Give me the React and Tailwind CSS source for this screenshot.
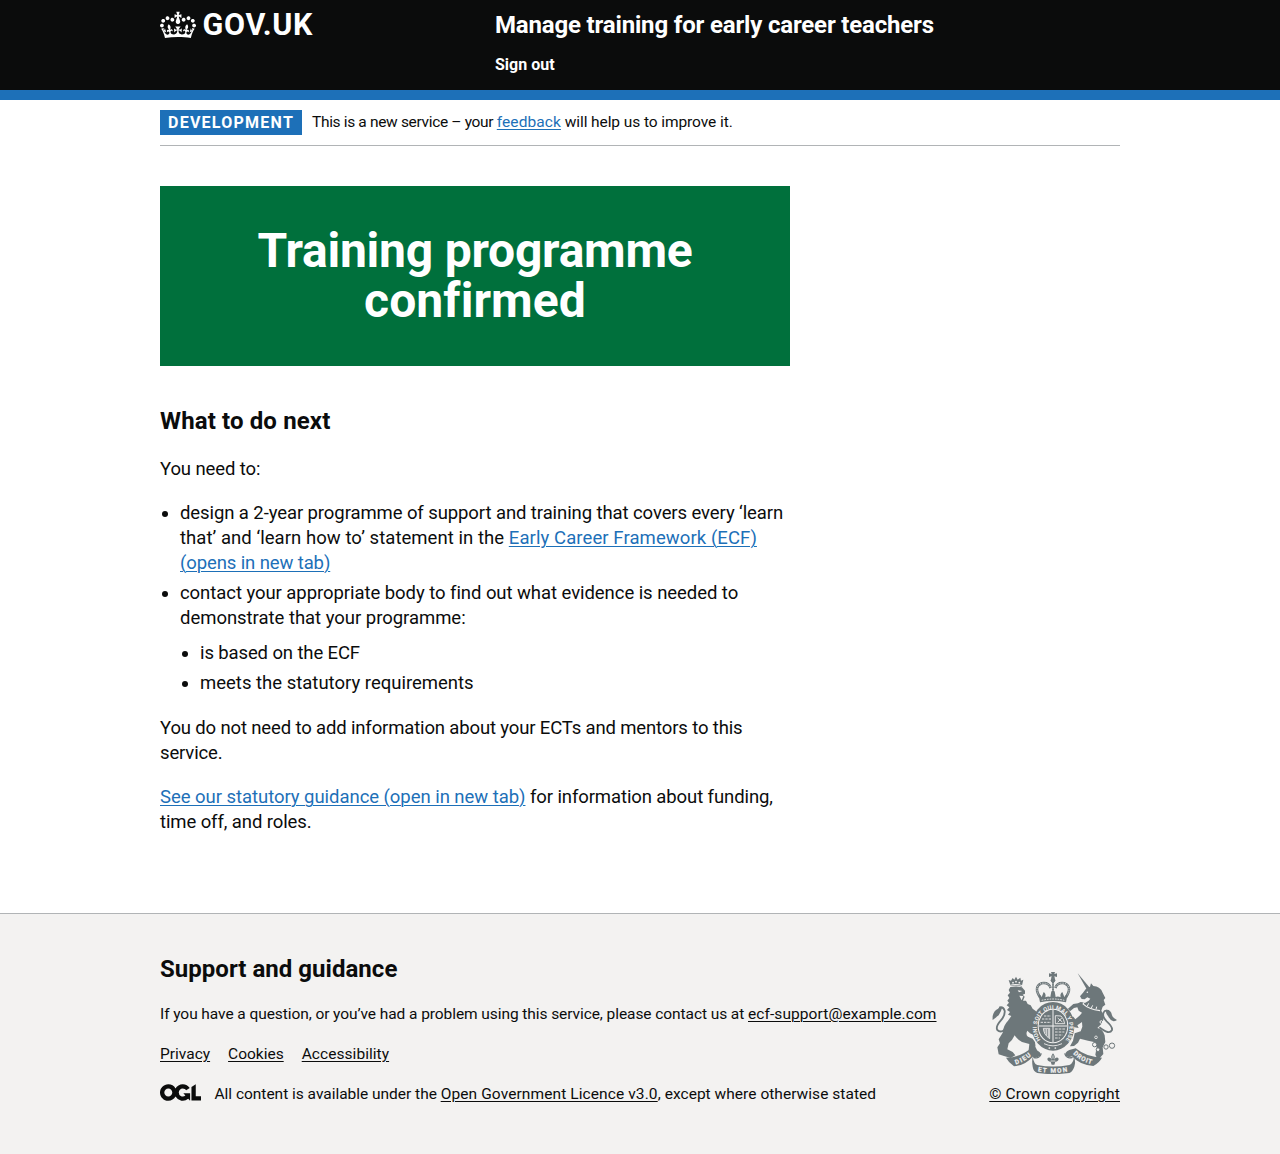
import React from 'react';

const link = 'text-[#1d70b8] underline decoration-1 underline-offset-2';
const darkLink = 'text-[#0b0c0c] underline decoration-1 underline-offset-2';

function Crown() {
  return (
    <svg viewBox="0 0 132 97" width="36" height="30" fill="currentColor" aria-hidden="true" className="shrink-0">
      <path
        fillRule="evenodd"
        d="M25 30.2c3.5 1.5 7.7-.2 9.1-3.7 1.5-3.6-.2-7.8-3.9-9.2-3.6-1.4-7.6.3-9.1 3.9-1.4 3.5.3 7.5 3.9 9zM9 39.5c3.6 1.5 7.8-.2 9.2-3.7 1.5-3.6-.2-7.8-3.9-9.1-3.6-1.5-7.6.2-9.1 3.8-1.4 3.5.3 7.5 3.8 9zM4.4 57.2c3.5 1.5 7.7-.2 9.1-3.8 1.5-3.6-.2-7.7-3.9-9.1-3.5-1.5-7.6.3-9.1 3.8-1.4 3.5.3 7.6 3.9 9.1zm38.3-21.4c3.5 1.5 7.7-.2 9.1-3.8 1.5-3.6-.2-7.7-3.9-9.1-3.6-1.5-7.6.3-9.1 3.8-1.3 3.6.4 7.7 3.9 9.1zm64.4-5.6c-3.6 1.5-7.8-.2-9.1-3.7-1.5-3.6.2-7.8 3.8-9.2 3.6-1.4 7.7.3 9.2 3.9 1.3 3.5-.4 7.5-3.9 9zm15.9 9.3c-3.6 1.5-7.7-.2-9.1-3.7-1.5-3.6.2-7.8 3.7-9.1 3.6-1.5 7.7.2 9.2 3.8 1.5 3.5-.3 7.5-3.8 9zm4.7 17.7c-3.6 1.5-7.8-.2-9.2-3.8-1.5-3.6.2-7.7 3.9-9.1 3.6-1.5 7.7.3 9.2 3.8 1.3 3.5-.4 7.6-3.9 9.1zM89.3 35.8c-3.6 1.5-7.8-.2-9.2-3.8-1.4-3.6.2-7.7 3.9-9.1 3.6-1.5 7.7.3 9.2 3.8 1.4 3.6-.3 7.7-3.9 9.1zM69.7 17.7l8.9 4.7V9.3l-8.9 2.8c-.2-.3-.5-.6-.9-.9L72.4 0H59.6l3.5 11.2c-.3.3-.6.5-.9.9l-8.8-2.8v13.1l8.8-4.7c.3.3.6.7.9.9l-5 15.4v.1c-.2.8-.4 1.6-.4 2.4 0 4.1 3.1 7.5 7 8.1h.2c.3 0 .7.1 1 .1.4 0 .7 0 1-.1h.2c4-.6 7.1-4.1 7.1-8.1 0-.8-.1-1.7-.4-2.4V34l-5.1-15.4c.4-.2.7-.6 1-.9zM66 92.8c16.9 0 32.8 1.1 47.1 3.2 4-16.9 8.9-26.7 14-33.5l-9.6-3.4c1 4.9 1.1 7.2 0 10.2-1.5-1.4-3-4.3-4.2-8.7L108.6 76c2.8-2 5-3.2 7.5-3.3-4.4 9.4-10 11.9-13.6 11.2-4.3-.8-6.3-4.6-5.6-7.9 1-4.7 5.7-5.9 8-.5 4.3-8.7-3-11.4-7.6-8.8 7.1-7.2 7.9-13.5 2.1-21.1-8 6.1-8.1 12.3-4.5 20.8-4.7-5.4-12.1-2.5-9.5 6.2 3.4-5.2 7.9-2 7.2 3.1-.6 4.3-6.4 7.8-13.5 7.2-10.3-.9-10.9-8-11.2-13.8 2.5-.5 7.1 1.8 11 7.3L80.2 60c-4.1 4.4-8 5.3-12.3 5.4 1.4-4.4 8-11.6 8-11.6H55.5s6.4 7.2 7.9 11.6c-4.2-.1-8-1-12.3-5.4l1.4 16.4c3.9-5.5 8.5-7.7 10.9-7.3-.3 5.8-.9 12.8-11.1 13.8-7.2.6-12.9-2.9-13.5-7.2-.7-5 3.8-8.3 7.1-3.1 2.7-8.7-4.6-11.6-9.4-6.2 3.7-8.5 3.6-14.7-4.6-20.8-5.8 7.6-5 13.9 2.2 21.1-4.7-2.6-11.9.1-7.7 8.8 2.3-5.5 7.1-4.2 8.1.5.7 3.3-1.3 7.1-5.7 7.9-3.5.7-9-1.8-13.5-11.2 2.5.1 4.7 1.3 7.5 3.3l-4.7-15.4c-1.2 4.4-2.7 7.2-4.3 8.7-1.1-3-.9-5.3 0-10.2l-9.5 3.4c5 6.9 9.9 16.7 14 33.5 14.8-2.1 30.8-3.2 47.7-3.2z"
      />
    </svg>
  );
}

function OglLogo() {
  return (
    <svg viewBox="0 0 483.2 195.7" width="41" height="17" fill="currentColor" aria-hidden="true" className="mr-[13.5px] mb-[3px] shrink-0">
      <path d="M421.5 142.8V.1l-50.7 32.3v161.1h112.4v-50.7zm-122.3-9.6A47.12 47.12 0 0 1 221 97.8c0-26 21.1-47.1 47.1-47.1 16.7 0 31.4 8.7 39.7 21.8l42.7-27.2A97.63 97.63 0 0 0 268.1 0c-36.5 0-68.3 20.1-85.1 49.7A98 98 0 0 0 97.8 0C43.9 0 0 43.9 0 97.8s43.9 97.8 97.8 97.8c36.5 0 68.3-20.1 85.1-49.7a97.76 97.76 0 0 0 149.6 25.4l19.4 22.2h3v-87.8h-80l24.3 27.5zM97.8 145c-26 0-47.1-21.1-47.1-47.1s21.1-47.1 47.1-47.1 47.1 21.1 47.1 47.1S123.8 145 97.8 145" />
    </svg>
  );
}

/* Royal coat of arms: lion and unicorn either side of the crowned shield. */
function CoatOfArms() {
  const ink = '#6d777a';
  const paper = '#f3f2f1';
  return (
    <svg viewBox="36 36 375 306" width="125" height="102" fill={ink} stroke="none" aria-hidden="true">
      <defs>
        <path id="garter" d="M182 240 A49 56 0 1 1 257 240" />
        <path id="dieu" d="M107 313 Q136 305 158 283" />
        <path id="mon" d="M173 334 Q219 343 267 334" />
        <path id="droit" d="M279 281 Q302 305 337 313" />
      </defs>

      {/* lion */}
      <path d="M92 78 L86 60 L93 62 L98 54 L103 59 L108 50 L113 59 L121 53 L123 62 L130 59 L125 80 Q108 74 92 78Z" />
      <path d="M91 81 Q108 77 126 82 L135 92 L135 101 L128 104 L134 110 L129 122 L138 122 L143 132 L152 136 L158 146 L168 154 L170 166 L162 178 L160 196 L170 210 L174 222 L166 228 L150 220 L142 212 Q136 224 144 230 L158 236 Q168 246 166 260 L172 272 L158 276 L146 270 L148 252 L126 246 Q110 236 104 226 Q98 240 86 250 L82 268 L98 276 L106 286 L92 294 L72 288 L56 283 L52 262 L60 250 L56 238 L68 218 Q70 196 84 182 L94 168 L84 164 L90 156 L81 150 L88 142 L80 136 L87 128 L82 122 L88 114 L83 106 L90 98 L86 90Z" />
      <path d="M88 194 Q66 224 52 210 Q46 200 62 182 Q76 166 74 152 Q70 140 60 142 Q58 154 46 162" fill="none" stroke={ink} strokeWidth="5.5" />
      <path d="M38 180 Q36 160 48 150 Q60 142 66 144 Q64 154 56 166 Q48 172 38 180Z" />
      <g fill={paper}>
        <circle cx="99" cy="68" r="2.6" /><circle cx="108" cy="65" r="2.6" /><circle cx="118" cy="68" r="2.6" />
        <path d="M91 74 Q108 70 126 75 L126 78 Q108 73 91 77Z" />
        <path d="M113 91 L127 93 L117 97Z" />
        <path d="M118 107 L130 108 L125 121Z" />
      </g>

      {/* unicorn */}
      <path d="M293 40 L330 84 L321 89Z" />
      <path d="M318 86 L330 80 L333 70 L340 78 Q360 78 368 98 L376 114 L371 120 L376 134 L368 140 L364 152 Q378 172 364 192 L352 204 Q368 206 374 226 L376 246 L368 262 L370 282 L354 300 L346 284 L350 262 L342 246 L324 242 L300 236 L294 248 L282 258 L270 259 L279 242 L284 220 L302 214 L307 200 L306 186 L292 196 L296 204 L284 202 L268 184 L267 171 L280 170 L286 178 L300 166 L306 158 L296 152 L292 142 L282 144 L270 154 L264 146 L280 132 L294 130 L302 126 L316 128 L326 122 L331 116 L322 112 L314 118 L305 117 L300 109 L309 98 Z" />
      <path d="M358 202 Q388 226 396 210 Q398 200 380 184 Q362 166 374 153 Q384 148 388 162" fill="none" stroke={ink} strokeWidth="5.5" />
      <path d="M376 150 Q392 146 396 166 Q400 176 411 180 Q396 190 388 174 Q378 164 376 150Z" />
      <g fill="none" stroke={paper} strokeWidth="3.5">
        <path d="M308 131 Q326 148 360 152" />
        <path d="M314 124 L310 132 M326 130 L322 138 M338 136 L334 144 M350 140 L348 148" strokeWidth="3" />
      </g>
      <circle cx="322" cy="97" r="2.3" fill={paper} />
      <g fill="none" stroke={ink} strokeWidth="3">
        <circle cx="344" cy="254" r="6.5" fill={paper} />
        <circle cx="354" cy="269" r="5.5" fill={paper} />
        <circle cx="378" cy="261" r="6.5" fill={paper} />
        <circle cx="396" cy="257" r="8" fill={paper} />
        <circle cx="364" cy="186" r="4" stroke={paper} />
        <circle cx="348" cy="232" r="4" stroke={paper} strokeWidth="2.4" />
      </g>

      {/* crown above the shield */}
      <path d="M213 36 H225 L223 42 L231 40 V51 L223 49 L225 56 H213 L215 49 L207 51 V40 L215 42Z" />
      <circle cx="219" cy="61" r="7" />
      <path d="M180 112 Q160 80 184 70 Q206 66 212 84 M258 112 Q278 80 254 70 Q232 66 226 84" fill="none" stroke={ink} strokeWidth="7.5" />
      <path d="M219 66 V96" stroke={ink} strokeWidth="6" fill="none" />
      <path d="M180 112 Q160 80 184 70 Q206 66 212 84 M258 112 Q278 80 254 70 Q232 66 226 84 M219 70 V92" fill="none" stroke={paper} strokeWidth="2.6" strokeDasharray="3 3.5" />
      <path d="M180 127 L175 103 Q182 104 185 111 L191 96 Q199 102 196 112 Q205 108 211 111 L214 94 H224 L227 111 Q234 108 242 112 Q239 102 247 96 L253 111 Q257 104 263 103 L258 127 Q219 119 180 127Z" />
      <path d="M185 121 Q219 113 253 121" fill="none" stroke={paper} strokeWidth="2.6" strokeDasharray="5 3" />

      {/* garter and shield */}
      <ellipse cx="219" cy="199" rx="64" ry="73" />
      <ellipse cx="219" cy="198" rx="46" ry="52" fill={paper} />
      <ellipse cx="219" cy="198" rx="43" ry="49" />
      <text fill={paper} fontFamily="Roboto, sans-serif" fontWeight="700" fontSize="17">
        <textPath href="#garter" textLength="242">HONI SOIT QUI MAL Y PENSE</textPath>
      </text>
      <path d="M219 150 V246 M177 198 H261" stroke={paper} strokeWidth="3" fill="none" />
      <g fill="none" stroke={paper} strokeWidth="2.6">
        <path d="M192 168 H213 M186 177 H213 M182 187 H213" strokeDasharray="7 3" />
        <path d="M226 167 V191 H254 Q252 176 243 168Z M233 174 L247 186 M245 174 L233 187" />
        <path d="M190 205 Q191 224 209 236 V205Z M195 207 V220 M200 207 V227 M205 207 V231" />
        <path d="M225 207 H256 M225 216 H253 M225 225 H248 M225 234 H240" strokeDasharray="8 3" />
      </g>
      <path d="M192 251 Q219 264 246 251" fill="none" stroke={paper} strokeWidth="2.6" />
      <circle cx="208" cy="264" r="2.6" fill={paper} />
      <circle cx="226" cy="264" r="2.6" fill={paper} />

      {/* motto scroll */}
      <path d="M78 293 Q120 292 151 266 L170 271 Q186 278 181 288 Q168 294 158 290 Q136 316 102 319 Q86 308 78 293Z" />
      <path d="M366 293 Q320 292 287 265 L268 270 Q252 278 257 288 Q266 294 276 289 Q300 316 340 318 Q358 308 366 293Z" />
      <path d="M158 290 Q162 312 172 315 Q219 324 268 315 Q280 310 282 290 Q288 304 283 320 Q277 336 268 339 Q219 346 172 339 Q160 334 158 320 Q155 304 158 290Z" />
      <path d="M160 292 Q180 298 184 280 M278 292 Q258 298 254 280" fill="none" stroke={ink} strokeWidth="3.5" />
      <path d="M219 280 Q228 290 222 299 Q230 288 236 296 Q236 304 226 305 L223 314 H215 L212 305 Q202 304 202 296 Q208 288 216 299 Q210 290 219 280Z" />
      <path d="M219 286 V296 M212 303 H226" stroke={paper} strokeWidth="2.4" />
      <g fill={paper} stroke={paper} strokeWidth="0.6" fontFamily="Roboto, sans-serif" fontWeight="700">
        <text fontSize="19"><textPath href="#dieu" textLength="54">DIEU</textPath></text>
        <text fontSize="19"><textPath href="#mon" textLength="90">ET MON</textPath></text>
        <text fontSize="19"><textPath href="#droit" textLength="64">DROIT</textPath></text>
      </g>
    </svg>
  );
}

function Header() {
  return (
    <header className="bg-[#0b0c0c] text-white">
      <div className="mx-auto flex h-[90px] w-[960px] pt-2.5">
        <a className="flex h-[30px] w-[335px] items-center gap-[6.5px]" href="#">
          <Crown />
          <span className="text-[30.5px] leading-[30px] font-bold tracking-[0.7px]">GOV.UK</span>
        </a>
        <div className="whitespace-nowrap">
          <a className="block text-2xl leading-[30px] font-bold tracking-[-0.17px]" href="#">
            Manage training for early career teachers
          </a>
          <nav className="mt-[15px]">
            <a className="block text-base leading-5 font-bold" href="#">Sign out</a>
          </nav>
        </div>
      </div>
      <div className="h-2.5 bg-[#1d70b8]" />
    </header>
  );
}

function PhaseBanner() {
  return (
    <div className="flex h-[46px] items-start border-b border-[#b1b4b6] pt-2.5">
      <strong className="mr-2.5 flex h-[25px] w-[142px] items-center bg-[#1d70b8] pl-2 text-base leading-none font-bold tracking-[1.25px] text-white">
        DEVELOPMENT
      </strong>
      <span className="text-[15.5px] leading-[24px] whitespace-nowrap">
        <span className="tracking-[-0.33px]">This is a new service – your </span>
        <a className={link + ' tracking-[0.08px]'} href="#">feedback</a>
        <span className="tracking-[-0.08px]"> will help us to improve it.</span>
      </span>
    </div>
  );
}

function Content() {
  return (
    <main className="w-[630px] pt-10 text-[18.5px] leading-[25px]">
      <div className="bg-[#00703c] p-10 text-center text-white">
        <h1 className="text-5xl leading-[50px] font-bold">
          <span className="block tracking-[-0.23px]">Training programme</span>
          <span className="block tracking-[0.1px]">confirmed</span>
        </h1>
      </div>
      <h2 className="mt-10 text-2xl leading-[30px] font-bold tracking-[0.13px]">What to do next</h2>
      <p className="mt-[21px] tracking-[-0.1px]">You need to:</p>
      <ul className="mt-[19px] list-disc pl-5 whitespace-nowrap">
        <li>
          <span className="tracking-[-0.09px]">design a 2-year programme of support and training that covers every ‘learn</span>
          <br />
          <span className="tracking-[0.05px]">that’ and ‘learn how to’ statement in the </span>
          <a className={link + ' tracking-[0.09px]'} href="#">Early Career Framework (ECF)</a>
          <br />
          <a className={link + ' tracking-[-0.11px]'} href="#">(opens in new tab)</a>
        </li>
        <li className="mt-[5px]">
          <span className="tracking-[-0.06px]">contact your appropriate body to find out what evidence is needed to</span>
          <br />
          <span className="tracking-[-0.03px]">demonstrate that your programme:</span>
          <ul className="mt-2.5 list-disc pl-5">
            <li className="tracking-[-0.12px]">is based on the ECF</li>
            <li className="mt-[5px]">meets the statutory requirements</li>
          </ul>
        </li>
      </ul>
      <p className="mt-5 whitespace-nowrap tracking-[-0.144px]">
        You do not need to add information about your ECTs and mentors to this
        <br />
        service.
      </p>
      <p className="mt-[19px] whitespace-nowrap tracking-[-0.1px]">
        <a className={link + ' tracking-[-0.045px]'} href="#">See our statutory guidance (open in new tab)</a> for information about funding,
        <br />
        time off, and roles.
      </p>
    </main>
  );
}

function Footer() {
  return (
    <footer className="mt-[78px] h-[241px] border-t border-[#b1b4b6] bg-[#f3f2f1] pt-10 text-[15.5px] leading-5">
      <div className="mx-auto flex w-[960px] items-end justify-between whitespace-nowrap">
        <div>
          <h2 className="text-2xl leading-[30px] font-bold tracking-[0.03px]">Support and guidance</h2>
          <p className="mt-5">
            <span className="tracking-[-0.075px]">
              If you have a question, or you’ve had a problem using this service, please contact us at{' '}
            </span>
            <a className={darkLink + ' tracking-[0.08px]'} href="#">ecf-support@example.com</a>
          </p>
          <nav className="mt-5 flex gap-[18px]">
            <a className={darkLink} href="#">Privacy</a>
            <a className={darkLink} href="#">Cookies</a>
            <a className={darkLink + ' tracking-[0.05px]'} href="#">Accessibility</a>
          </nav>
          <div className="mt-5 flex h-5 items-center">
            <OglLogo />
            <span className="tracking-[-0.02px]">
              All content is available under the <a className={darkLink + ' tracking-[0.1px]'} href="#">Open Government Licence v3.0</a>
            </span>
            <span className="tracking-[0.035px]">, except where otherwise stated</span>
          </div>
        </div>
        <a className={darkLink + ' flex flex-col items-center gap-[10px] tracking-[0.14px]'} href="#">
          <CoatOfArms />
          <span>© Crown copyright</span>
        </a>
      </div>
    </footer>
  );
}

export default function App() {
  return (
    <div className="min-h-[1154px] bg-white font-[Roboto,sans-serif] text-[#0b0c0c]">
      <Header />
      <div className="mx-auto w-[960px]">
        <PhaseBanner />
        <Content />
      </div>
      <Footer />
    </div>
  );
}
